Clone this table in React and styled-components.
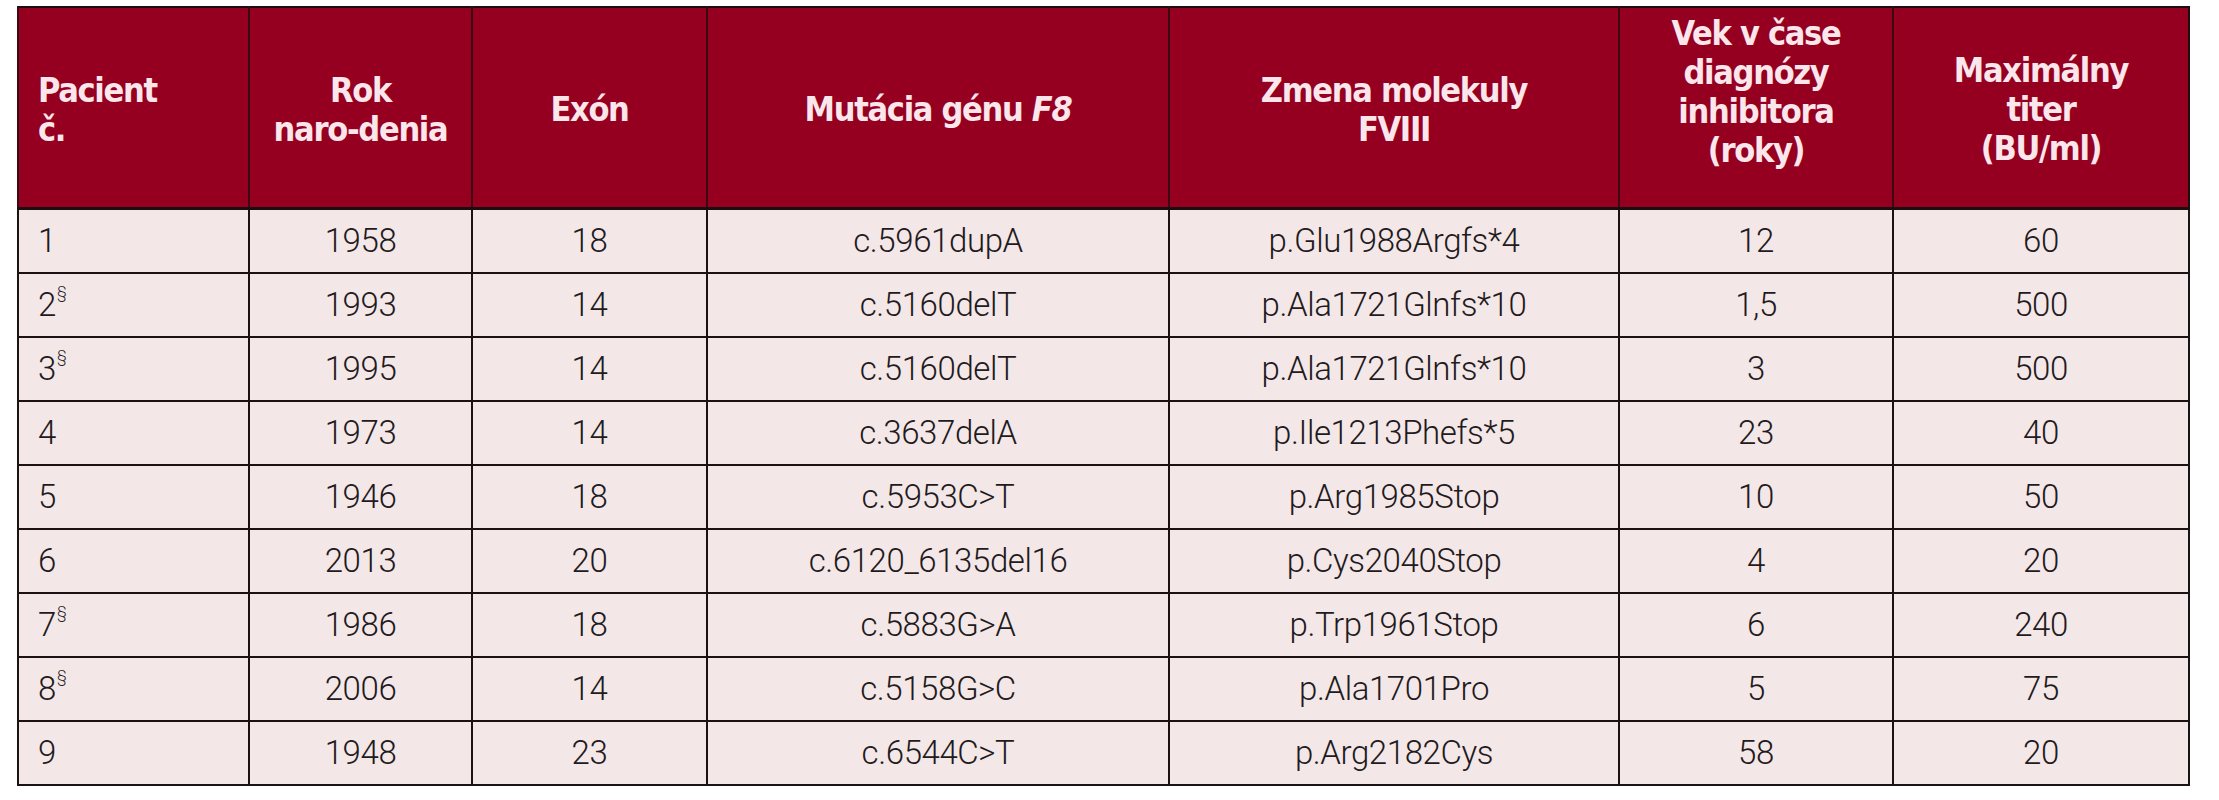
import React from "react";
import styled, { createGlobalStyle } from "styled-components";

const GlobalStyle = createGlobalStyle`
  html, body {
    margin: 0;
    padding: 0;
    background: #ffffff;
  }
`;

const Page = styled.div`
  padding: 6px 0 0 17px;
`;

const Table = styled.table`
  width: 2171px;
  table-layout: fixed;
  border-collapse: collapse;
  border: 2px solid #1c0d0f;
`;

const HeadCell = styled.th`
  box-sizing: border-box;
  height: 201px;
  padding: ${(p) => (p.$raise ? "0 8px 30px" : "5px 8px 0")};
  padding-left: ${(p) => (p.$left ? "19px" : "8px")};
  background: #950020;
  color: #fbe6ec;
  font-family: "Liberation Sans Narrow", "DejaVu Sans Condensed", "Liberation Sans", sans-serif;
  font-weight: 700;
  font-size: 34px;
  letter-spacing: -1.3px;
  line-height: 39px;
  text-align: ${(p) => (p.$left ? "left" : "center")};
  vertical-align: middle;
  border-left: 2px solid #3a0a10;
  border-bottom: 3px solid #1c0d0f;

  em {
    font-style: italic;
  }
`;

const Cell = styled.td`
  height: 62px;
  padding: 0 ${(p) => (p.$left ? "0 0 19px" : "8px")};
  background: #f4e7e8;
  color: #221a1c;
  font-family: Roboto, "Liberation Sans", sans-serif;
  font-weight: 300;
  font-size: 33px;
  letter-spacing: -0.4px;
  text-align: ${(p) => (p.$left ? "left" : "center")};
  vertical-align: middle;
  border: 2px solid #1c1214;
  white-space: nowrap;
`;

const Mark = styled.sup`
  font-size: 16px;
  vertical-align: top;
  position: relative;
  top: -2px;
  margin-left: 1px;
`;

const widths = [231, 223, 235, 462, 450, 274, 296];

const rows = [
  ["1", false, "1958", "18", "c.5961dupA", "p.Glu1988Argfs*4", "12", "60"],
  ["2", true, "1993", "14", "c.5160delT", "p.Ala1721Glnfs*10", "1,5", "500"],
  ["3", true, "1995", "14", "c.5160delT", "p.Ala1721Glnfs*10", "3", "500"],
  ["4", false, "1973", "14", "c.3637delA", "p.Ile1213Phefs*5", "23", "40"],
  ["5", false, "1946", "18", "c.5953C>T", "p.Arg1985Stop", "10", "50"],
  ["6", false, "2013", "20", "c.6120_6135del16", "p.Cys2040Stop", "4", "20"],
  ["7", true, "1986", "18", "c.5883G>A", "p.Trp1961Stop", "6", "240"],
  ["8", true, "2006", "14", "c.5158G>C", "p.Ala1701Pro", "5", "75"],
  ["9", false, "1948", "23", "c.6544C>T", "p.Arg2182Cys", "58", "20"],
];

export default function App() {
  return (
    <Page>
      <GlobalStyle />
      <Table>
        <colgroup>
          {widths.map((w, i) => (
            <col key={i} style={{ width: w }} />
          ))}
        </colgroup>
        <thead>
          <tr>
            <HeadCell $left>
              Pacient
              <br />č.
            </HeadCell>
            <HeadCell>
              Rok
              <br />
              naro-denia
            </HeadCell>
            <HeadCell>Exón</HeadCell>
            <HeadCell>
              Mutácia génu <em>F8</em>
            </HeadCell>
            <HeadCell>
              Zmena molekuly
              <br />
              FVIII
            </HeadCell>
            <HeadCell $raise>
              Vek v čase
              <br />
              diagnózy
              <br />
              inhibitora
              <br />
              (roky)
            </HeadCell>
            <HeadCell>
              Maximálny
              <br />
              titer
              <br />
              (BU/ml)
            </HeadCell>
          </tr>
        </thead>
        <tbody>
          {rows.map(([num, mark, ...rest]) => (
            <tr key={num}>
              <Cell $left>
                {num}
                {mark && <Mark>§</Mark>}
              </Cell>
              {rest.map((v, i) => (
                <Cell key={i}>{v}</Cell>
              ))}
            </tr>
          ))}
        </tbody>
      </Table>
    </Page>
  );
}
